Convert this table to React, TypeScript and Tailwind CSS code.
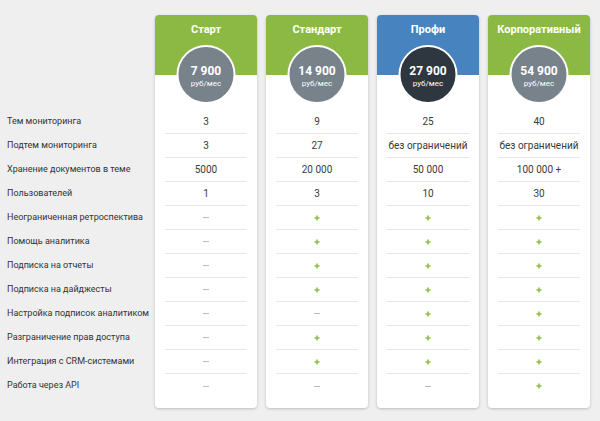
const features = [
  'Тем мониторинга',
  'Подтем мониторинга',
  'Хранение документов в теме',
  'Пользователей',
  'Неограниченная ретроспектива',
  'Помощь аналитика',
  'Подписка на отчеты',
  'Подписка на дайджесты',
  'Настройка подписок аналитиком',
  'Разграничение прав доступа',
  'Интеграция с CRM-системами',
  'Работа через API',
]

type Plan = {
  name: string
  price: string
  header: string
  circle: string
  values: string[]
}

const plans: Plan[] = [
  {
    name: 'Старт',
    price: '7 900',
    header: 'bg-[#8cb944]',
    circle: 'bg-[#78828b]',
    values: ['3', '3', '5000', '1', '-', '-', '-', '-', '-', '-', '-', '-'],
  },
  {
    name: 'Стандарт',
    price: '14 900',
    header: 'bg-[#8cb944]',
    circle: 'bg-[#78828b]',
    values: ['9', '27', '20 000', '3', '+', '+', '+', '+', '-', '+', '+', '-'],
  },
  {
    name: 'Профи',
    price: '27 900',
    header: 'bg-[#4784bf]',
    circle: 'bg-[#2e3740]',
    values: ['25', 'без ограничений', '50 000', '10', '+', '+', '+', '+', '+', '+', '+', '-'],
  },
  {
    name: 'Корпоративный',
    price: '54 900',
    header: 'bg-[#8cb944]',
    circle: 'bg-[#78828b]',
    values: ['40', 'без ограничений', '100 000 +', '30', '+', '+', '+', '+', '+', '+', '+', '+'],
  },
]

function Cell({ value }: { value: string }) {
  if (value === '+') {
    return (
      <svg width="6" height="6" viewBox="0 0 6 6">
        <path d="M3 0.5v5M0.5 3h5" stroke="#8dc044" strokeWidth="1.6" />
      </svg>
    )
  }
  if (value === '-') {
    return <span className="block w-[6px] h-px bg-[#bdbdbd]" />
  }
  return <span>{value}</span>
}

function PlanCard({ plan }: { plan: Plan }) {
  return (
    <div className="w-[102px] h-[393px] shrink-0 bg-white rounded-[4px] shadow-[0_1px_3px_rgba(0,0,0,0.22)] flex flex-col overflow-hidden">
      <div className={`relative h-[60px] ${plan.header}`}>
        <div className="pt-[8px] text-center text-white font-bold text-[11px] leading-[14px]">{plan.name}</div>
        <div
          className={`absolute top-[30px] left-1/2 -translate-x-1/2 w-[59px] h-[59px] rounded-full border-2 border-white ${plan.circle} flex flex-col items-center justify-center text-white z-10 pt-[5px]`}
        >
          <div className="font-bold text-[12px] leading-[13px]">{plan.price}</div>
          <div className="text-[8px] leading-[11px]">руб/мес</div>
        </div>
      </div>
      <div className="h-[35px]" />
      <div className="px-[10px]">
        {plan.values.map((v, i) => (
          <div
            key={i}
            className={`h-[24px] flex items-center justify-center text-[10px] text-[#3a3a3a] ${
              i < plan.values.length - 1 ? 'border-b border-[#e6e6e6]' : ''
            }`}
          >
            <Cell value={v} />
          </div>
        ))}
      </div>
    </div>
  )
}

export default function App() {
  return (
    <div className="w-[600px] h-[421px] bg-[#efefef] font-['Roboto',sans-serif] overflow-hidden">
      <div className="flex pt-[15px] gap-[9px]">
        <div className="w-[146px] pl-[7px] pt-[95px]">
          {features.map((f) => (
            <div key={f} className="h-[24px] flex items-center whitespace-nowrap text-[9px] text-[#333]">
              {f}
            </div>
          ))}
        </div>
        {plans.map((p) => (
          <PlanCard key={p.name} plan={p} />
        ))}
      </div>
    </div>
  )
}
